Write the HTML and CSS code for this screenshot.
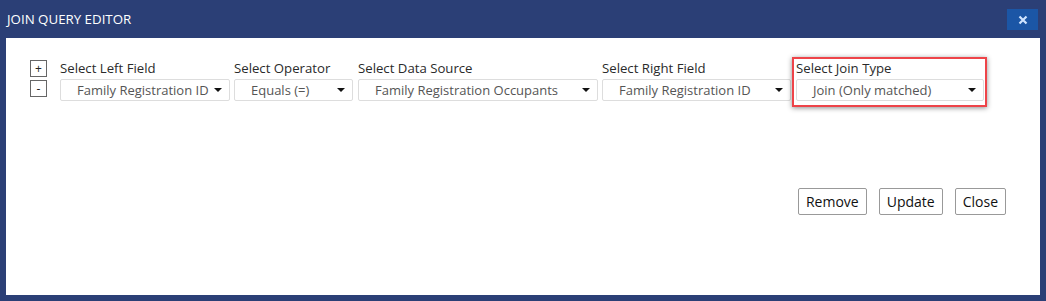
FILE: index.html
```html
<!DOCTYPE html>
<html lang="en">

<head>
    <meta charset="UTF-8" />
    <meta name="viewport" content="width=device-width, initial-scale=1" />
    <title>Join Query Editor</title>
    <link rel="stylesheet" href="styles.css">
</head>

<body>

    <div class="dialog">
        <div class="titlebar">
            <span class="title">JOIN QUERY EDITOR</span>
            <button class="close-x" title="Close">
                <svg width="10" height="10" viewBox="0 0 10 10">
                    <path d="M1.5 1.5 L8.5 8.5 M8.5 1.5 L1.5 8.5" stroke="#cfe4ff" stroke-width="2.2" />
                </svg>
            </button>
        </div>

        <div class="body">
            <div class="row">
                <div class="pm">
                    <button class="pm-btn">+</button>
                    <button class="pm-btn">-</button>
                </div>

                <div class="field left">
                    <div class="label">Select Left Field</div>
                    <div class="select"><span>Family Registration ID</span><i class="caret"></i></div>
                </div>
                <div class="field operator">
                    <div class="label">Select Operator</div>
                    <div class="select"><span>Equals (=)</span><i class="caret"></i></div>
                </div>
                <div class="field source">
                    <div class="label">Select Data Source</div>
                    <div class="select"><span>Family Registration Occupants</span><i class="caret"></i></div>
                </div>
                <div class="field right">
                    <div class="label">Select Right Field</div>
                    <div class="select"><span>Family Registration ID</span><i class="caret"></i></div>
                </div>
                <div class="field jointype highlight">
                    <div class="label">Select Join Type</div>
                    <div class="select"><span>Join (Only matched)</span><i class="caret"></i></div>
                </div>
            </div>

            <div class="actions">
                <button class="btn">Remove</button>
                <button class="btn">Update</button>
                <button class="btn">Close</button>
            </div>
        </div>
    </div>

</body>

</html>
```

FILE: styles.css
```css
html,
body {
    margin: 0;
    padding: 0;
    background: #2b3f76;
    width: 100vw;
    height: 100vh;
    font-family: 'Open Sans', 'Noto Sans', Arial, sans-serif;
    overflow: hidden;
}
.dialog {
    display: flex;
    flex-direction: column;
    height: 100vh;
}
.titlebar {
    height: 38px;
    display: flex;
    align-items: center;
    justify-content: space-between;
    padding: 0 8px 0 7px;
    box-sizing: border-box;
}
.title {
    color: #fff;
    font-size: 13.3px;
    margin-top: -1px;
}
.close-x {
    width: 31px;
    height: 21px;
    margin-top: 1px;
    background: #1b56a6;
    border: none;
    padding: 0;
    display: flex;
    justify-content: center;
    align-items: center;
}
.body {
    background: #fff;
    margin: 0 6px 6px 6px;
    height: 257px;
    box-sizing: border-box;
    padding: 22px 34px 0 24px;
}
.row {
    display: flex;
    align-items: flex-start;
}
.pm {
    display: flex;
    flex-direction: column;
    gap: 3px;
    width: 30px;
}
.pm-btn {
    width: 17px;
    height: 17px;
    padding: 0;
    border: 1px solid #666;
    background: #fff;
    font-family: inherit;
    font-size: 12px;
    line-height: 14px;
    color: #222;
}
.field {
    display: flex;
    flex-direction: column;
    margin-right: 4px;
}
.label {
    height: 19px;
    font-size: 13.2px;
    line-height: 17px;
    color: #2a2a2a;
}
.select {
    height: 22px;
    box-sizing: border-box;
    border: 1px solid #ddd;
    border-radius: 2px;
    display: flex;
    align-items: center;
    justify-content: space-between;
    padding: 0 7px 0 16px;
    font-size: 13px;
    color: #555;
    white-space: nowrap;
}
.caret {
    flex: none;
    margin-left: 4px;
    width: 0;
    height: 0;
    border-left: 4px solid transparent;
    border-right: 4px solid transparent;
    border-top: 4px solid #111;
}
.left { width: 170px; }
.operator { width: 119px; margin-right: 5px; }
.source { width: 240px; }
.right { width: 189px; margin-right: 5px; }
.jointype { width: 188px; }
.highlight {
    position: relative;
}
.highlight::after {
    content: '';
    position: absolute;
    top: -3px;
    left: -4px;
    right: -3px;
    bottom: -6px;
    border: 2px solid #ee4449;
    box-shadow: 0 1px 5px rgba(0, 0, 0, 0.45);
    pointer-events: none;
}
.actions {
    display: flex;
    justify-content: flex-end;
    gap: 12px;
    margin-top: 87px;
}
.btn {
    height: 27px;
    padding: 0 7px;
    border: 1px solid #999;
    border-radius: 2px;
    background: #fff;
    font-family: inherit;
    font-size: 14px;
    color: #111;
}
```
